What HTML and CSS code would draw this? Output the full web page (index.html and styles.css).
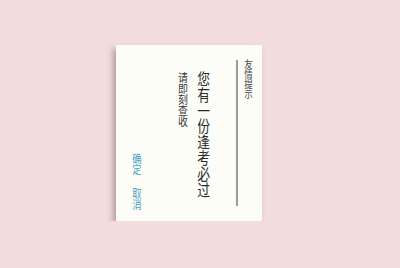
FILE: index.html
```html
<!DOCTYPE html>
<html lang="zh-CN">
<head>
  <meta charset="UTF-8">
  <title>友情提示</title>
  <meta name="viewport" content="width=device-width, initial-scale=1.0">
  <link rel="stylesheet" href="styles.css">
</head>
<body>

  <div class="card">
    <div class="title">友情提示</div>
    <div class="rule"></div>
    <div class="main">您有一份逢考必过</div>
    <div class="sub">请即刻查收</div>
    <div class="actions">
      <span class="btn">确定</span>
      <span class="btn">取消</span>
    </div>
  </div>

</body>
</html>
```

FILE: styles.css
```css
body {
	margin: 0;
	padding: 45px 0 0 116px;
	background-color: #f2dcdd;
	font-family: "Noto Sans CJK SC", "Noto Sans", sans-serif;
}

.card {
	width: 146px;
	height: 176px;
	box-sizing: border-box;
	padding: 14px 9px 0 0;
	background: #fdfdf8;
	display: flex;
	flex-direction: row-reverse;
	align-items: flex-start;
	box-shadow: -3px 4px 6px rgba(110, 70, 70, 0.45);
}

.title, .main, .sub, .actions {
	writing-mode: vertical-rl;
	line-height: 1;
}

.title {
	font-size: 10px;
	color: #444;
	width: 10px;
	transform: scaleX(0.85);
}

.rule {
	width: 2px;
	height: 146px;
	margin: 1px 5px 0 0;
	background: #9a9a9a;
}

/* glyphs in the shot are narrower than they are tall */
.main {
	font-size: 16px;
	color: #2a2a2a;
	margin: 12px 26px 0 0;
	letter-spacing: -0.2px;
	transform: scaleX(0.8);
	transform-origin: right center;
}

.sub {
	font-size: 11px;
	color: #383838;
	margin: 13px 6px 0 0;
	transform: scaleX(0.9);
}

.actions {
	display: flex;
	gap: 13px;
	margin: 94px 35px 0 0;
	transform: scaleX(0.85);
}

.btn {
	font-size: 11px;
	color: #4a9fc4;
}
```
